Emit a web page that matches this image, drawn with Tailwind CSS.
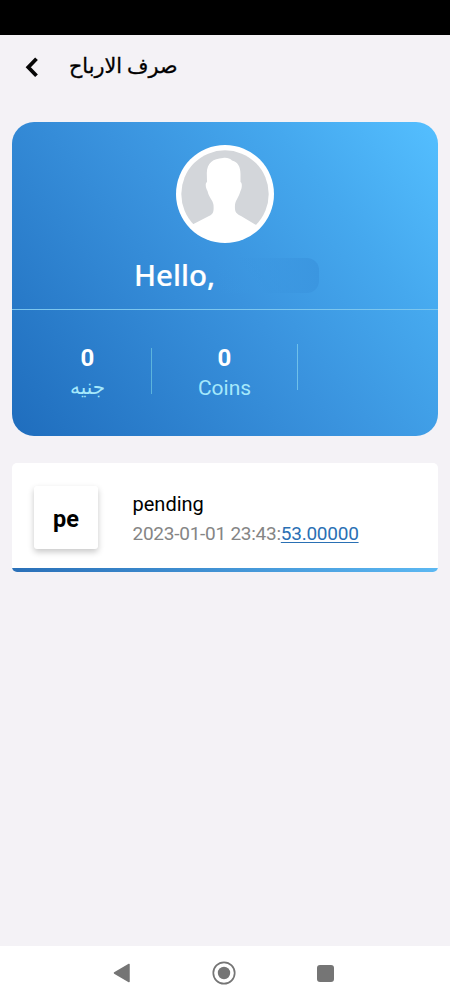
<!DOCTYPE html>
<html lang="ar">
<head>
<meta charset="utf-8">
<title>صرف الارباح</title>
<script src="https://cdn.jsdelivr.net/npm/@tailwindcss/browser@4"></script>
</head>
<body class="w-[450px] h-[1000px] overflow-hidden bg-[#f4f2f6] font-[Roboto,'DejaVu_Sans',sans-serif] flex flex-col">
  <div class="h-[35px] shrink-0 bg-black"></div>
  <header class="h-[87px] shrink-0 flex items-start pl-[24px] pt-[22px]">
    <svg class="w-[14px] h-[20px]" viewBox="0 0 14 20" fill="none" stroke="#060606" stroke-width="3.8"><path d="M12.500 1.700 4.300 10.200l8.200 8.500"/></svg>
    <h1 dir="rtl" class="ml-[31px] -mt-[6px] text-[20.700px] leading-[30px] font-medium text-black [-webkit-text-stroke:0.3px_black] whitespace-nowrap">صرف الارباح</h1>
  </header>
  <section class="mx-3 h-[314px] w-[426px] shrink-0 rounded-[22px] bg-[linear-gradient(52deg,#1f6dbd_0%,#3a93de_50%,#45a8ee_75%,#54bfff_100%)] overflow-hidden flex flex-col">
    <div class="h-[187px] shrink-0 flex flex-col pt-[23px]">
      <svg class="w-[98px] h-[98px] ml-[163.500px] shrink-0" viewBox="0 0 98 98">
        <circle cx="49" cy="49" r="49" fill="#fff"/>
        <circle cx="49" cy="49" r="43.700" fill="#d3d6da"/>
        <path fill="#fff" d="M47 13C51 12.500 54 13.500 56 15.500C62 17 64.500 22 64.500 29L64.500 37C66.500 38 66 43 64.500 46C63 52 59.500 55 59 60C58.500 67 60 68.500 65 71L81 80.500C74 90 62 96 49 96S24 90 16.500 79.500L33 71C37 69 38 67 37.500 60C37 55 32.500 52 31.500 46C29.500 43 29 38 31 37L30.800 28C31 18 37 13.500 47 13Z"/>
      </svg>
      <div class="mt-[14px] ml-[122px] flex items-center">
        <p class="font-['Noto_Sans',sans-serif] font-medium [-webkit-text-stroke:0.2px_white] text-[29.500px] leading-[36px] text-white w-[82px]">Hello,</p>
        <div class="h-[35px] w-[103px] rounded-r-[12px] bg-linear-to-r from-[#3b96e0]/0 to-[#3b96e0]"></div>
      </div>
    </div>
    <div class="h-px shrink-0 bg-[#7cc6ee]"></div>
    <div class="flex items-start">
      <div class="w-[139px] pl-[12px] pt-[33px] text-center">
        <p class="text-[24px] leading-[30px] font-bold text-white">0</p>
        <p dir="rtl" class="text-[20px] leading-[28px] text-[#a5e8fb]">جنيه</p>
      </div>
      <div class="w-px h-[46px] mt-[38px] bg-[#5cb4dd]"></div>
      <div class="w-[145px] pt-[33px] text-center">
        <p class="text-[24px] leading-[30px] font-bold text-white">0</p>
        <p class="text-[21px] leading-[31px] text-[#a5e8fb]">Coins</p>
      </div>
      <div class="w-px h-[46px] mt-[34px] bg-[#6fc0ea]"></div>
    </div>
  </section>
  <section class="mx-3 mt-[27px] h-[109px] w-[426px] shrink-0 rounded-[5px] overflow-hidden bg-white flex flex-col">
    <div class="flex-1 flex pl-[22px] pt-[23px]">
      <div class="w-[64px] h-[63px] rounded-[3px] bg-white shadow-[0_3px_6px_rgba(0,0,0,0.22)] flex items-center justify-center text-[23.500px] font-bold text-black pt-[4px]">pe</div>
      <div class="ml-[34.500px] pt-[3px] whitespace-nowrap">
        <p class="text-[20px] leading-[30px] text-black">pending</p>
        <p class="text-[19px] leading-[30px] tracking-[-0.250px] text-[#858585]">2023-01-01 23:43:<span class="text-[#2a70b4] underline decoration-1 underline-offset-2">53.00000</span></p>
      </div>
    </div>
    <div class="h-[4px] bg-linear-to-r from-[#2a70b8] to-[#5cb8f2]"></div>
  </section>
  <nav class="mt-auto h-[54px] shrink-0 bg-white flex items-center pl-[113px]">
    <svg class="w-[18px] h-[22px]" viewBox="0 0 18 22"><path d="M1.500 11 16 2.500v17Z" fill="#757575" stroke="#757575" stroke-width="1.500" stroke-linejoin="round"/></svg>
    <svg class="ml-[80.500px] w-[24px] h-[24px]" viewBox="0 0 24 24"><circle cx="12" cy="12" r="10.700" fill="none" stroke="#757575" stroke-width="1.700"/><circle cx="12" cy="12" r="6.200" fill="#757575"/></svg>
    <div class="ml-[81px] w-[17px] h-[17px] rounded-[3px] bg-[#757575]"></div>
  </nav>
</body>
</html>
